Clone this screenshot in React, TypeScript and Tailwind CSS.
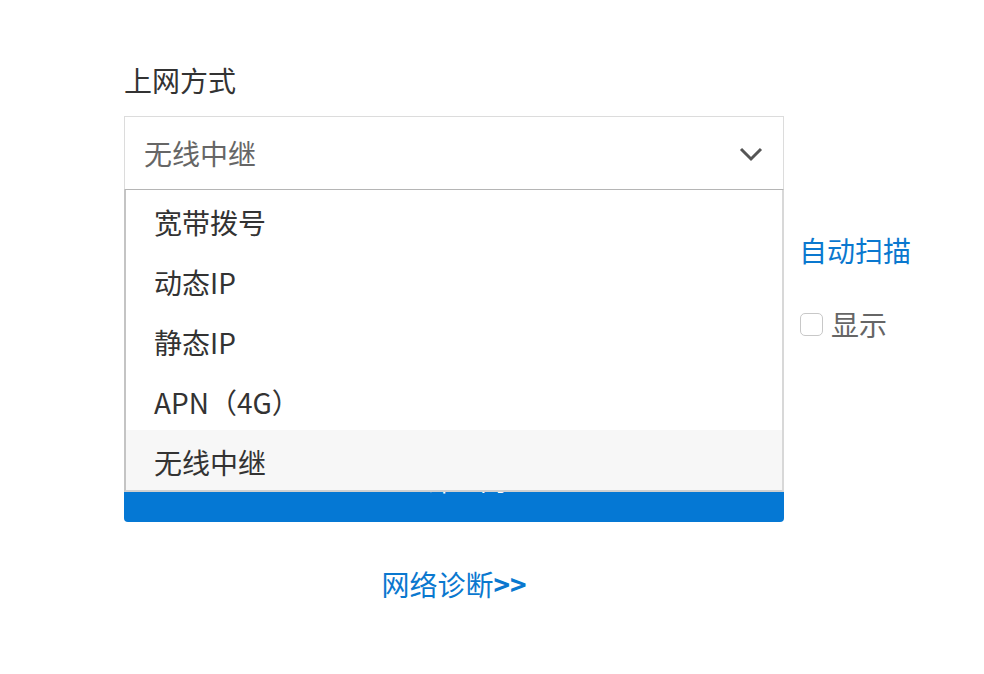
import React from "react";

const FONT = '"Noto Sans CJK SC", "Noto Sans", "Liberation Sans", sans-serif';

export default function App() {
  const options = ["宽带拨号", "动态IP", "静态IP", "APN（4G）", "无线中继"];
  return (
    <div className="w-[984px] h-[674px] bg-white overflow-hidden" style={{ fontFamily: FONT }}>
      <div className="ml-[124px] pt-[62px] w-[660px]">
        <div className="text-[28px] leading-[36px] text-[#333]">上网方式</div>
        <div className="relative mt-[18px]">
          <div className="h-[74px] border border-[#dcdcdc] border-b-[#b5b5b5] flex items-center justify-between pl-[19px] pr-[20px]">
            <span className="text-[28px] text-[#666]">无线中继</span>
            <svg width="24" height="16" viewBox="0 0 24 16" className="mt-[2px]">
              <polyline points="2,3 12,13 22,3" fill="none" stroke="#555" strokeWidth="3" />
            </svg>
          </div>

          {/* underlying form rows */}
          <div className="flex items-center h-[74px] mt-[23px]">
            <div className="w-[660px] h-[60px] border border-[#ddd] shrink-0" />
            <span className="ml-[15px] text-[28px] leading-[36px] text-[#0a78cf] whitespace-nowrap">自动扫描</span>
          </div>
          <div className="flex items-center h-[74px]">
            <div className="w-[660px] h-[60px] border border-[#ddd] shrink-0" />
            <span className="ml-[16px] w-[23px] h-[23px] rounded-[5px] border border-[#c8c8c8] bg-white shrink-0" />
            <span className="ml-[8px] text-[28px] leading-[36px] text-[#666] whitespace-nowrap">显示</span>
          </div>
          <div className="mt-[84px] h-[77px] pb-[7px] rounded-[4px] bg-[#0578d4] flex items-center justify-center text-[26px] leading-[30px] text-white">
            立即上网
          </div>
          <div className="mt-[42px] text-center text-[28px] leading-[40px] text-[#0a78cf]">
            网络诊断<span className="font-semibold">&gt;&gt;</span>
          </div>

          {/* dropdown overlay */}
          <div className="absolute left-0 right-0 top-[74px] h-[302px] bg-white border-x-2 border-b-2 border-l-[#c4c4c4] border-r-[#d8d8d8] border-b-[#d0d0d0] flex flex-col">
            {options.map((o, i) => (
              <div
                key={o}
                className={
                  "h-[60px] flex items-center pl-[28px] pt-[3px] text-[28px] text-[#333] " +
                  (i === options.length - 1 ? "bg-[#f7f7f7]" : "")
                }
              >
                {o}
              </div>
            ))}
          </div>
        </div>
      </div>
    </div>
  );
}
